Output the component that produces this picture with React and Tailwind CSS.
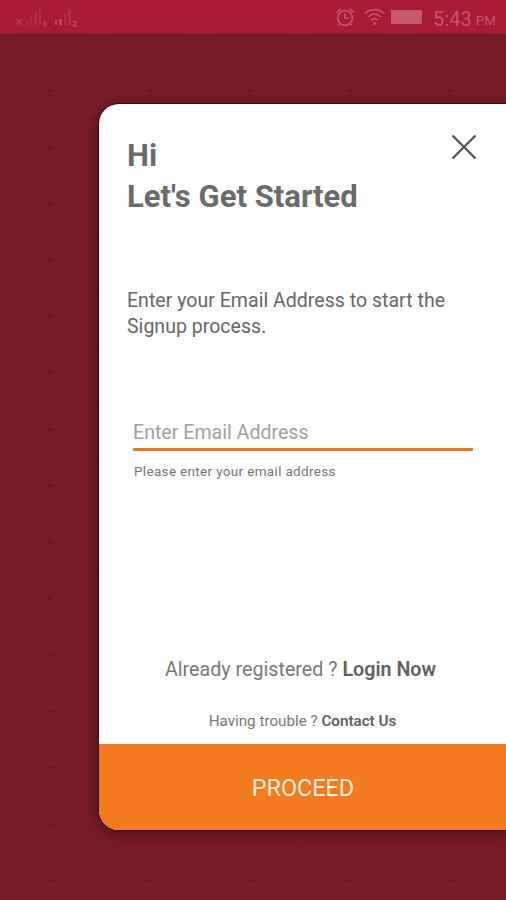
import React from 'react';

function SignalBars({ second = false }) {
  if (second) {
    return (
      <svg className="h-[22px] w-6" viewBox="0 0 24 22" fill="currentColor">
        <path d="M0 12h2v5H0zM4 11h3v6H4z" opacity="0.7" />
        <path d="M9 5h2v12H9zM13 1h3v16h-3z" opacity="0.3" />
        <path d="M18 13h3.500v3l-2 1.500h2V19H18v-2.500l2-1.200v-.8h-2z" opacity="0.7" />
      </svg>
    );
  }
  return (
    <svg className="h-[22px] w-[30px]" viewBox="0 0 30 22" fill="currentColor">
      <path d="M.5 11l5.500 5.500M6 11L.5 16.500" stroke="currentColor" strokeWidth="1.400" opacity="0.6" />
      <path d="M10 12h2v5h-2zM14 8h2v9h-2zM18 4h3v13h-3zM23 1h2v16h-2z" opacity="0.25" />
      <path d="M28 13h1.600v6H28z" opacity="0.7" />
    </svg>
  );
}

function AlarmIcon() {
  return (
    <svg className="h-5 w-5" viewBox="0 0 20 20" fill="none" stroke="currentColor" strokeWidth="1.700">
      <circle cx="10" cy="11" r="7.300" />
      <path d="M10 6.500V11h4M1.500 5.500l4-3.700M18.500 5.500l-4-3.700M5 16.500l-2 2M15 16.500l2 2" />
    </svg>
  );
}

function WifiIcon() {
  return (
    <svg className="h-[18px] w-[21px]" viewBox="0 0 21 18" fill="none" stroke="currentColor" strokeWidth="1.700">
      <path d="M1 5.500C6.500.3 14.500.3 20 5.500M4 9c4-3.800 9-3.800 13 0M7 12.300c2.200-2 4.800-2 7 0" />
      <circle cx="10.500" cy="15.500" r="1.300" fill="currentColor" stroke="none" />
    </svg>
  );
}

function StatusBar() {
  return (
    <header className="relative flex h-[34px] items-center bg-[#a51b32] text-[#c65968]">
      <div className="flex gap-[9px] pt-[3px] pl-4">
        <SignalBars />
        <SignalBars second />
      </div>
      <div className="ml-auto flex items-center pr-[10px]">
        <AlarmIcon />
        <span className="ml-[9px] flex">
          <WifiIcon />
        </span>
        <span className="ml-[6px] h-[14px] w-[31px] bg-[#c65968]" />
        <span className="ml-[11px] pt-[3px] text-[20px] leading-none">5:43</span>
        <span className="ml-1 pt-[7px] text-[13.5px] leading-none">PM</span>
      </div>
    </header>
  );
}

// faint triangular lattice behind the card
function Backdrop() {
  return (
    <svg className="absolute inset-0 h-full w-full" aria-hidden="true">
      <defs>
        <pattern id="lattice" x="0" y="62.700" width="100" height="56.400" patternUnits="userSpaceOnUse">
          <g fill="none" stroke="#5f1320">
            <path d="M15 28.200h70M0 .5h33M67 .5h33" strokeOpacity="0.400" />
            <path
              d="M50 28.200l-16-28.200M50 28.200l16-28.200M50 28.200l-16 28.200M50 28.200l16 28.200M0 0l16 28.200L0 56.400M100 0L84 28.200l16 28.200"
              strokeOpacity="0.250"
            />
          </g>
          <circle cx="50" cy="28.200" r="1.800" fill="#5a101c" opacity="0.400" />
        </pattern>
      </defs>
      <rect width="100%" height="100%" fill="url(#lattice)" />
    </svg>
  );
}

function SignupCard() {
  return (
    <main className="relative mt-[70px] ml-[99px] flex h-[726px] flex-col overflow-hidden rounded-l-[20px] bg-white text-[#666] shadow-[0_3px_14px_1px_rgba(25,0,10,0.45),0_0_0_1px_#4b0711]">
      <div className="flex justify-between pt-[30px] pl-7">
        <h1 className="pt-px text-[31px] leading-[41px] font-bold tracking-[0.03px] text-[#6a6a6a]">
          Hi
          <br />
          Let's Get Started
        </h1>
        <button type="button" aria-label="Close" className="mr-[29px] h-[26px] w-[26px]">
          <svg viewBox="0 0 26 26" stroke="#505050" strokeWidth="2.200" fill="none">
            <path d="M1.500 1.500l23 23M24.500 1.500l-23 23" />
          </svg>
        </button>
      </div>

      <p className="mt-[71px] pl-7 text-[19.5px] leading-[26px] tracking-[0.03px]">
        Enter your Email Address to start the
        <br />
        Signup process.
      </p>

      <div className="mt-[75px] ml-[34px] w-[340px]">
        <input
          type="email"
          placeholder="Enter Email Address"
          className="block h-[36px] w-full border-b-3 border-[#df7b20] pt-[2px] text-[19.6px] outline-none placeholder:text-[#a0a0a0]"
        />
        <p className="mt-[10px] pl-px text-[13.5px] leading-5 tracking-[0.33px] text-[#757575]">
          Please enter your email address
        </p>
      </div>

      <div className="mt-auto text-center">
        <p className="pr-[4px] text-[19.7px] leading-6 text-[#777]">
          Already registered ? <a className="font-semibold text-[#606060]">Login Now</a>
        </p>
        <p className="mt-[29px] mb-[13px] text-[15.2px] leading-5 text-[#777]">
          Having trouble ? <a className="font-semibold text-[#606060]">Contact Us</a>
        </p>
      </div>

      <button type="button" className="h-[86px] shrink-0 bg-[#f47b20] pt-[3px] pl-px text-[23.4px] text-[#fff1de]">
        PROCEED
      </button>
    </main>
  );
}

export default function App() {
  return (
    <div className="relative h-[900px] w-[506px] overflow-hidden bg-[#771c25] font-[Roboto,sans-serif]">
      <Backdrop />
      <StatusBar />
      <SignupCard />
    </div>
  );
}
